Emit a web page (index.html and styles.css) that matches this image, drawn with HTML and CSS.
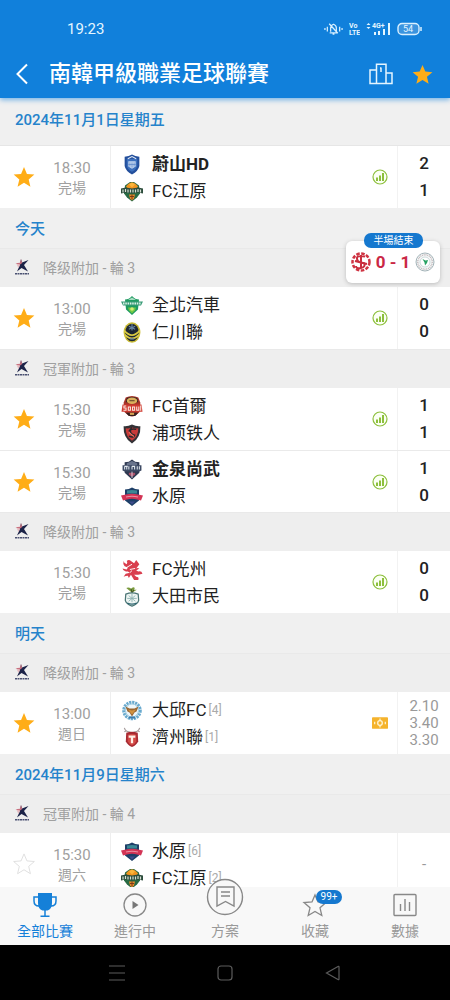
FILE: index.html
```
<!DOCTYPE html>
<html lang="zh-Hant">
<head>
  <meta charset="UTF-8">
  <meta name="viewport" content="width=device-width, initial-scale=1">
  <title>南韓甲級職業足球聯賽</title>
  <link rel="stylesheet" href="styles.css">
</head>
<body>
  <!-- ICON SPRITE START -->
  <svg class="sprite" aria-hidden="true">
    <symbol id="star" viewBox="0 0 24 24"><path d="M12 1l3.200 7.600 8.100.7-6.200 5.300 1.900 8L12 18.300l-7 4.300 1.900-8L.7 9.300l8.100-.7z"/></symbol>
    <symbol id="kleague" viewBox="0 0 16 16">
      <path d="M7 0l1 3.500L14.500 1 10 6l4 6.500L7.500 9 3 12.500 5.500 7z" fill="#1c2348"/>
      <path d="M1.500 4.200L6 3.800 7 0l1.200 4L5.500 6z" fill="#c7707f"/>
      <path d="M2.500 5l3.500.5L4.500 9z" fill="#e6bac0"/>
      <path d="M1 14.700h14" stroke="#4a5172" stroke-width="1.400" stroke-dasharray="2 .5"/>
    </symbol>
    <symbol id="stats" viewBox="0 0 16 16">
      <circle cx="8" cy="8" r="7" fill="#fbfff4" stroke="#8dbf3c" stroke-width="1.200"/>
      <path d="M5 8.500V12M8 6.500V12M11 4V12" stroke="#8dbf3c" stroke-width="2"/>
    </symbol>
    <symbol id="ulsan" viewBox="0 0 20 20">
      <path d="M3 2.500Q7 2.500 10 .5q3 2 7 2v9q-1 5-7 8-6-3-7-8z" fill="#234f9c"/>
      <path d="M5 4.500h10v7q-1 3.500-5 5.500-4-2-5-5.500z" fill="#3c70bd"/>
      <path d="M6.500 7h7v5L10 14l-3.500-2z" fill="#c5d7f0"/>
      <path d="M8 8v4M10 8v5M12 8v4M6.500 10h7" stroke="#5b87c9" stroke-width=".7"/>
      <path d="M6 4.500l4-2 4 2" stroke="#e4ecf7" fill="none"/>
    </symbol>
    <symbol id="gangwon" viewBox="0 0 22 20">
      <path d="M4 4l5-3.500h4L18 4l1 8-3 4-5 4-5-4-3-4z" fill="#286a44"/>
      <path d="M5 5q6-8 12 0l-2 3H7z" fill="#f0941f"/>
      <path d="M8 3l3-2 3 2-3 3z" fill="#fbb63c"/>
      <path d="M0 7l5-1 6 1 6-1 5 1v5l-5-1-6 1-6-1-5 1z" fill="#2c4c3c"/>
      <path d="M2 8v3M4.500 7.500v3M7 8v3M9.500 8v3M12 8v3M14.500 8v3M17 7.500v3M19.500 8v3" stroke="#d6e2d5" stroke-width="1.200"/>
      <path d="M8 13h6l-1 4-2 2-2-2z" fill="#e58a28"/>
      <path d="M9 15l4 0M11 13v5" stroke="#7b3b18"/>
    </symbol>
    <symbol id="jeonbuk" viewBox="0 0 22 20">
      <path d="M4 4q4 0 7-3.500Q14 4 18 4l-1 10-6 5.500L5 14z" fill="#1e9a61"/>
      <path d="M7 4.500l4-2.500 4 2.500z" fill="#a6dcc0"/>
      <path d="M0 6h22l-2 4H2z" fill="#3a9c78"/>
      <path d="M2 8h18" stroke="#d9f1e5" stroke-width="1.800" stroke-dasharray="1.500 .8"/>
      <path d="M7 12h8l-1 3-3 3-3-3z" fill="#71c943"/>
      <circle cx="11" cy="13.500" r="1.800" fill="#d8eb75"/>
    </symbol>
    <symbol id="incheon" viewBox="0 0 20 20">
      <ellipse cx="10" cy="10" rx="8" ry="9.700" fill="#c9bb35"/>
      <ellipse cx="10" cy="10" rx="6.500" ry="8.400" fill="#1e2732"/>
      <path d="M2.500 8q7.500 9 15 0M3 12q7 7 14 0" stroke="#d9cb43" stroke-width="1.600" fill="none"/>
      <path d="M10 2v6M7 4l6 3M13 4L7 7M8 16h4" stroke="#6585a4" stroke-width="1.100"/>
      <circle cx="10" cy="10" r="1.700" fill="#182431"/>
    </symbol>
    <symbol id="seoul" viewBox="0 0 20 20">
      <path d="M4 1.500q6-3 12 0l2 5-1 9q-4 4-7 4t-7-4l-1-9z" fill="#a83328"/>
      <path d="M5 2q5-2 10 0l1 4H4z" fill="#362323"/>
      <ellipse cx="10" cy="4.500" rx="5" ry="3" fill="#dab05c"/>
      <path d="M7.500 4.500h5" stroke="#604327"/>
      <path d="M1 8h18l1 7H0z" fill="#cf392f"/>
      <path d="M4.500 9.500H2.300v2h2v2H1.800M6.500 10.500h2v3h-2zM10.500 10.500h2v3h-2zM14.500 10v3.500h2V10M18.300 9v5" stroke="#fbe7df" stroke-width="1" fill="none"/>
      <path d="M4 16h12l-3 3H7z" fill="#342020"/>
      <path d="M8 17h4" stroke="#d6a453" stroke-width="2"/>
    </symbol>
    <symbol id="pohang" viewBox="0 0 20 20">
      <path d="M2 3q4 .5 8-1.500Q14 3.500 18 3q.5 11-8 16.500Q1.500 14 2 3z" fill="#333236"/>
      <path d="M4 5q3 .5 6-1 3 1.500 6 1 0 8-6 12-6-4-6-12z" fill="#c83a38"/>
      <path d="M14 6Q8 5 8.500 8t4 3.500q0 3-5.500 1M10 4l-3 4" stroke="#29282c" stroke-width="1.300" fill="none"/>
      <path d="M7 9l5 4" stroke="#ed7965"/>
    </symbol>
    <symbol id="gimcheon" viewBox="0 0 20 20">
      <path d="M3 3l4-.5L10 .5l3 2 4 .5v10l-7 6.500L3 13z" fill="#2e3850"/>
      <path d="M5 4l5-2 5 2v3H5z" fill="#68738b"/>
      <path d="M1 6h18v5l-2 1H3l-2-1z" fill="#3c4963"/>
      <path d="M3 10V7m2 0v3m2-3v3m3-3v3m2.500-3v3m2.500-3v3m2-3v3M3 7h3m4 0h3" stroke="#e1e7ed" fill="none"/>
      <path d="M7 13h6v2l-3 2-3-2z" fill="#a95069"/>
      <path d="M10 12v6" stroke="#eae5ee" stroke-width=".8"/>
    </symbol>
    <symbol id="suwon" viewBox="0 0 22 20">
      <path d="M4 3q4 0 7-2 3 2 7 2v11l-7 5.500L4 14z" fill="#1d3f67"/>
      <path d="M6 4q5-1 10 0v3H6z" fill="#3b8795"/>
      <path d="M0 9l5-1q6-1.500 12 0l5 1-2 5-4-1q-5-1.500-10 0l-4 1z" fill="#d33455"/>
      <path d="M5 10.500q6-1.500 12 0" stroke="#ea92a3" stroke-width="1.200" fill="none"/>
      <path d="M8 15h6l-3 3z" fill="#3f4c8d"/>
    </symbol>
    <symbol id="gwangju" viewBox="0 0 20 20">
      <path d="M9 2q-2-2-4 0 1 1 0 3-3-1-3-3Q1 5 3 7l3 1-1 2-4-1q1 3 5 3l2 1-4 1-2 3q2-1 4-1l1 2 2-3 3 5h4q1-3-2-3l-2-2 4 0 4-1q-1-3-4-2l-2-1 3-2q-2-1-3 0l3-4-3-4-2 3z" fill="#d93e4e"/>
      <path d="M5 8l5-3M8 10l5-1M8 13l2-2" stroke="#fff" stroke-width=".9"/>
    </symbol>
    <symbol id="daejeon" viewBox="0 0 20 22">
      <path d="M10 7L4 2q3-1 5 1 2-3 4-1l-1 2 3 0-5 3z" fill="#78993a"/>
      <path d="M9 3l1 4 2-3" stroke="#3d4e29" fill="none"/>
      <path d="M3.500 8.500Q10 6 16.500 8.500L17 15q-1 4-7 6-6-2-7-6z" fill="#eef5f3" stroke="#497474" stroke-width="1.300"/>
      <path d="M5 13h10M10 8v9M6.500 16l7-6M6.500 10l7 6" stroke="#8bb1af" stroke-width=".9"/>
      <path d="M5 18q5 2 10 0" stroke="#2f6670" stroke-width="1.500" fill="none"/>
    </symbol>
    <symbol id="daegu" viewBox="0 0 22 20">
      <circle cx="11" cy="10" r="8.300" fill="#edf6fa" stroke="#68a9ce" stroke-width="3" stroke-dasharray="2.200 .8"/>
      <circle cx="11" cy="10" r="6.500" fill="none" stroke="#9ccbe1"/>
      <path d="M4.500 6l4 2h5l4-2-2 5-2 1-2.500 4L8.500 12l-2-1z" fill="#996632"/>
      <path d="M7 9l4 1 4-1-4 5z" fill="#d1913f"/>
      <path d="M8 17h6" stroke="#3b7bae" stroke-width="2"/>
    </symbol>
    <symbol id="jeju" viewBox="0 0 20 22">
      <path d="M2 1q1 4 5 4l3 1 3-1q4 0 5-4M4 4l-2 1M16 4l2 1" fill="none" stroke="#a59b9a" stroke-width="1.200"/>
      <path d="M4 6q6-2 12 0l.5 9q-1.500 4-6.500 6-5-2-6.500-6z" fill="#a62931"/>
      <path d="M5.500 8q4.500-1.500 9 0v7q-1 3-4.500 4.500Q6.500 18 5.500 15z" fill="#d34a46"/>
      <path d="M6.500 9h7v2.200h-2.300V17H8.800v-5.800H6.500z" fill="#fff0e6"/>
    </symbol>
  </svg>
  <!-- ICON SPRITE END -->

  <div class="app">
    <!-- HEADER START -->
    <header class="header">
      <div class="status">
        <span class="clock">19:23</span>
        <div class="status-icons">
          <svg width="19" height="14" viewBox="0 0 20 14" fill="none" stroke="#d9f0ff" stroke-width="1.300">
            <path d="M6 11h8.500M7 10V6q0-3 3-4 3 1 3 4v4M5.500 1.500l9 10M9 12.500h2M3.500 4.500v5M16.500 4.500v5M1 6v2M19 6v2"/>
          </svg>
          <svg width="11" height="14" viewBox="0 0 11 14" fill="#e5f6ff" class="tiny"><text x="0" y="6">Vo</text><text x="0" y="13">LTE</text></svg>
          <svg width="25" height="14" viewBox="0 0 25 14" fill="#e5f6ff" class="tiny">
            <path d="M2.500 1l2 2h-4zM2.500 7l2-2h-4zM8 10h2v3H8zM12 9h2v4h-2zM17 7h2v6h-2zM22 1h2v12h-2z"/>
            <text x="6" y="6">4G+</text>
          </svg>
          <svg width="25" height="14" viewBox="0 0 25 14">
            <rect x="1" y="1.500" width="21" height="11" rx="4" fill="#3b94df" stroke="#d9f0ff" stroke-width="1.400"/>
            <path d="M24 5v4" stroke="#d9f0ff" stroke-width="1.500"/>
            <text x="6" y="10" class="battery">54</text>
          </svg>
        </div>
      </div>
      <div class="titlebar">
        <button class="icon-btn back" aria-label="返回">
          <svg width="14" height="22" viewBox="0 0 14 22" fill="none" stroke="#fff" stroke-width="2"><path d="M12 1.500L2.500 11 12 20.500"/></svg>
        </button>
        <h1>南韓甲級職業足球聯賽</h1>
        <button class="icon-btn" aria-label="排名">
          <svg width="24" height="22" viewBox="0 0 24 22" fill="none" stroke="#e5f5ff" stroke-width="1.500"><path d="M7.500 7H1v13.500h22V10h-6M7.500 20.500V1.200H17v19.300M12 4.500V9M11 5h1"/></svg>
        </button>
        <button class="icon-btn fav-on" aria-label="收藏聯賽"><svg width="21" height="21"><use href="#star"/></svg></button>
      </div>
    </header>
    <!-- HEADER END -->

    <!-- MATCH LIST START -->
    <main class="list">
      <h2 class="date date-sticky">2024年11月1日星期五</h2>

      <article class="match">
        <button class="fav fav-on" aria-label="收藏"><svg><use href="#star"/></svg></button>
        <div class="time"><time>18:30</time><span>完場</span></div>
        <div class="teams">
          <div class="team win"><svg><use href="#ulsan"/></svg>蔚山HD</div>
          <div class="team"><svg><use href="#gangwon"/></svg>FC江原</div>
        </div>
        <svg class="mark"><use href="#stats"/></svg>
        <div class="score"><b>2</b><b>1</b></div>
      </article>

      <h2 class="date">今天</h2>
      <h3 class="round"><svg><use href="#kleague"/></svg>降级附加 - 輪 3</h3>
      <article class="match">
        <button class="fav fav-on" aria-label="收藏"><svg><use href="#star"/></svg></button>
        <div class="time"><time>13:00</time><span>完場</span></div>
        <div class="teams">
          <div class="team"><svg><use href="#jeonbuk"/></svg>全北汽車</div>
          <div class="team"><svg><use href="#incheon"/></svg>仁川聯</div>
        </div>
        <svg class="mark"><use href="#stats"/></svg>
        <div class="score"><b>0</b><b>0</b></div>
      </article>

      <h3 class="round"><svg><use href="#kleague"/></svg>冠軍附加 - 輪 3</h3>
      <article class="match">
        <button class="fav fav-on" aria-label="收藏"><svg><use href="#star"/></svg></button>
        <div class="time"><time>15:30</time><span>完場</span></div>
        <div class="teams">
          <div class="team"><svg><use href="#seoul"/></svg>FC首爾</div>
          <div class="team"><svg><use href="#pohang"/></svg>浦项铁人</div>
        </div>
        <svg class="mark"><use href="#stats"/></svg>
        <div class="score"><b>1</b><b>1</b></div>
      </article>
      <article class="match">
        <button class="fav fav-on" aria-label="收藏"><svg><use href="#star"/></svg></button>
        <div class="time"><time>15:30</time><span>完場</span></div>
        <div class="teams">
          <div class="team win"><svg><use href="#gimcheon"/></svg>金泉尚武</div>
          <div class="team"><svg><use href="#suwon"/></svg>水原</div>
        </div>
        <svg class="mark"><use href="#stats"/></svg>
        <div class="score"><b>1</b><b>0</b></div>
      </article>

      <h3 class="round"><svg><use href="#kleague"/></svg>降级附加 - 輪 3</h3>
      <article class="match">
        <span></span>
        <div class="time"><time>15:30</time><span>完場</span></div>
        <div class="teams">
          <div class="team"><svg><use href="#gwangju"/></svg>FC光州</div>
          <div class="team"><svg><use href="#daejeon"/></svg>大田市民</div>
        </div>
        <svg class="mark"><use href="#stats"/></svg>
        <div class="score"><b>0</b><b>0</b></div>
      </article>

      <h2 class="date">明天</h2>
      <h3 class="round"><svg><use href="#kleague"/></svg>降级附加 - 輪 3</h3>
      <article class="match">
        <button class="fav fav-on" aria-label="收藏"><svg><use href="#star"/></svg></button>
        <div class="time"><time>13:00</time><span>週日</span></div>
        <div class="teams">
          <div class="team"><svg><use href="#daegu"/></svg>大邱FC<small>[4]</small></div>
          <div class="team"><svg><use href="#jeju"/></svg>濟州聯<small>[1]</small></div>
        </div>
        <svg class="mark" viewBox="0 0 18 18">
          <rect x="0" y="2.500" width="18" height="13" rx="1" fill="#f5b32c"/>
          <path d="M9 4v10M3 7.500v3M15 7.500v3" stroke="#fff0c4" stroke-width="1.500"/>
          <circle cx="9" cy="9" r="2.600" fill="#f5b32c" stroke="#fff3d0" stroke-width="1.500"/>
        </svg>
        <div class="odds"><span>2.10</span><span>3.40</span><span>3.30</span></div>
      </article>

      <h2 class="date">2024年11月9日星期六</h2>
      <h3 class="round"><svg><use href="#kleague"/></svg>冠軍附加 - 輪 4</h3>
      <article class="match">
        <button class="fav" aria-label="收藏"><svg><use href="#star"/></svg></button>
        <div class="time"><time>15:30</time><span>週六</span></div>
        <div class="teams">
          <div class="team"><svg><use href="#suwon"/></svg>水原<small>[6]</small></div>
          <div class="team"><svg><use href="#gangwon"/></svg>FC江原<small>[2]</small></div>
        </div>
        <span></span>
        <div class="odds"><span>-</span></div>
      </article>
    </main>
    <!-- MATCH LIST END -->

    <!-- LIVE SCORE BUBBLE -->
    <aside class="live">
      <span class="live-state">半場結束</span>
      <svg width="20" height="20" viewBox="0 0 20 20">
        <circle cx="10" cy="10" r="8.500" fill="#fff" stroke="#cf3443" stroke-width="2.500" stroke-dasharray="3.500 1.500"/>
        <path d="M14 4.500Q5 3 6 7t7 4q2 4-3 5t-5-2M4 9l12 3M10 3v14" fill="none" stroke="#c92e3e" stroke-width="2"/>
      </svg>
      <strong>0 - 1</strong>
      <svg width="20" height="20" viewBox="0 0 20 20">
        <circle cx="10" cy="10" r="9" fill="#f5f8f8" stroke="#a3b3b8"/>
        <circle cx="10" cy="10" r="7.200" fill="none" stroke="#c3b8bb" stroke-width="1.500" stroke-dasharray="1 .8"/>
        <circle cx="10" cy="10" r="5" fill="#fff" stroke="#b9c9cc" stroke-width=".7"/>
        <path d="M7.500 7l3 1.500L13 8l-1 3-2 2.500-.5-3z" fill="#27a263"/>
      </svg>
    </aside>

    <!-- TAB BAR START -->
    <nav class="tabs">
      <a href="#" class="active">
        <svg width="26" height="26" viewBox="0 0 26 26" fill="none" stroke="#1580d8" stroke-width="1.500">
          <path d="M6 1h14v10q0 6-4.500 7.500h-5Q6 17 6 11z" fill="#1580d8" stroke="none"/>
          <path d="M6 5H2v4q0 5 5 5M20 5h4v4q0 5-5 5M13 18v6M8.500 24.200h9"/>
        </svg>
        全部比賽
      </a>
      <a href="#">
        <svg width="26" height="26" viewBox="0 0 26 26"><circle cx="13" cy="13" r="11" fill="none" stroke="#888" stroke-width="1.300"/><path d="M10.500 9l6 4-6 4z" fill="#777"/></svg>
        進行中
      </a>
      <a href="#" class="plan">
        <svg width="38" height="38" viewBox="0 0 38 38" fill="none" stroke="#888" stroke-width="1.400"><circle cx="19" cy="19" r="17.500" fill="#f8f8f8"/><path d="M11 9h17v19l-8.500-4.500L11 28zM15 14h9M15 18h9"/></svg>
        方案
      </a>
      <a href="#">
        <svg width="26" height="26" viewBox="0 0 26 26" fill="none" stroke="#888" stroke-width="1.300"><path d="M13 3l3 7 8 .6-6 5.200 1.800 7.700-6.800-4-6.800 4L8 15.800l-6-5.200 8-.6z"/></svg>
        <span class="badge">99+</span>
        收藏
      </a>
      <a href="#">
        <svg width="26" height="26" viewBox="0 0 26 26" fill="none" stroke="#888" stroke-width="1.400"><rect x="2" y="2.500" width="22" height="21" rx="1"/><path d="M8.500 12v7M13 7v12M17.500 10v9"/></svg>
        數據
      </a>
    </nav>
    <!-- TAB BAR END -->

    <div class="sysnav">
      <button aria-label="選單"><svg width="18" height="18" viewBox="0 0 18 18"><path d="M1 2h16M1 9h16M1 16h16"/></svg></button>
      <button aria-label="主畫面"><svg width="18" height="18" viewBox="0 0 18 18"><rect x="2" y="2" width="14" height="14" rx="3"/></svg></button>
      <button aria-label="上一頁"><svg width="18" height="18" viewBox="0 0 18 18"><path d="M15 3v12q0 1-1 .5L2.500 9 14 2.500q1-.5 1 .5z"/></svg></button>
    </div>
  </div>
</body>
</html>
```
FILE: styles.css
```
* {
  margin: 0;
  padding: 0;
  box-sizing: border-box;
}
body {
  font-family: Roboto, "Noto Sans CJK TC", sans-serif;
  background: #f0f0f0;
  color: #222;
}
button {
  display: flex;
  align-items: center;
  justify-content: center;
  border: 0;
  background: none;
  cursor: pointer;
}
svg { display: block; flex: none; }
.sprite { position: absolute; width: 0; height: 0; }

.app {
  position: relative;
  display: flex;
  flex-direction: column;
  height: 100vh;
}

/* header */
.header {
  z-index: 2;
  background: #1180db;
  color: #fff;
  box-shadow: 0 2px 5px #78b4e6;
}
.status {
  display: flex;
  align-items: center;
  justify-content: space-between;
  height: 50px;
  padding: 8px 28px 0 67px;
}
.clock { font-size: 15px; color: #e5f6ff; }
.status-icons { display: flex; gap: 6px; }
.tiny { font-size: 7px; font-weight: 700; }
.battery { font-size: 9px; fill: #e5f6ff; }
.titlebar {
  display: flex;
  align-items: center;
  gap: 19px;
  height: 48px;
  padding: 0 17px 0 14px;
}
.titlebar h1 {
  flex: 1;
  font-size: 22px;
  line-height: 48px;
  font-weight: 500;
  white-space: nowrap;
}
.back { width: 16px; }
.fav-on { fill: #ffad17; }

/* match list */
.list {
  flex: 1;
  min-height: 0;
  overflow-y: auto;
  scrollbar-width: none;
}
.date {
  height: 40px;
  padding-left: 15px;
  font-size: 15px;
  line-height: 42px;
  font-weight: 500;
  color: #2583cb;
}
.date-sticky {
  height: 48px;
  line-height: 44px;
  border-bottom: 1px solid #e6e6e6;
}
.round {
  display: flex;
  align-items: center;
  gap: 13px;
  height: 39px;
  padding: 0 14px 2px;
  background: #eee;
  border-top: 1px solid #e9e9e9;
  font-size: 14px;
  font-weight: 400;
  color: #a0a0a0;
}
.round svg { width: 16px; height: 16px; }

.match {
  display: grid;
  grid-template-columns: 48px 62px 1fr 34px 53px;
  align-items: center;
  height: 62px;
  background: #fff;
}
.match + .match { border-top: 1px solid #eaeaea; }
.fav svg { width: 22px; height: 22px; }
.fav:not(.fav-on) svg { fill: #fff; stroke: #ddd; }
.time {
  display: flex;
  flex-direction: column;
  align-items: center;
  padding: 2px 14px 0 0;
  font-size: 14px;
  line-height: 20px;
  color: #a0a0a0;
}
.time time { font-size: 15px; }
.teams {
  align-self: stretch;
  padding: 5px 0 0 10px;
  border-left: 1px solid #eee;
}
.team {
  display: flex;
  align-items: center;
  height: 27px;
  font-size: 17px;
  line-height: 27px;
  white-space: nowrap;
}
.team svg { width: 22px; height: 21px; margin-right: 9px; }
.team small { margin-left: 2px; font-size: 12px; color: #aaa; }
.win { font-weight: 700; }
.mark { width: 16px; height: 16px; justify-self: center; }
.score, .odds {
  display: flex;
  flex-direction: column;
  align-self: stretch;
  justify-content: center;
  align-items: center;
  border-left: 1px solid #f2f2f2;
}
.score { font-size: 17px; line-height: 27px; }
.score b { font-weight: 500; }
.odds { font-size: 15px; line-height: 17px; color: #999; }

/* floating live score */
.live {
  position: absolute;
  z-index: 3;
  top: 241px;
  right: 10px;
  display: flex;
  align-items: center;
  justify-content: center;
  gap: 5px;
  width: 94px;
  height: 42px;
  border-radius: 6px;
  background: #fff;
  box-shadow: 0 1px 4px #bbb;
}
.live strong { font-size: 17px; font-weight: 700; color: #ca2846; white-space: nowrap; }
.live-state {
  position: absolute;
  top: -8px;
  left: 18px;
  width: 59px;
  border-radius: 7px;
  background: #1578cf;
  color: #fff;
  font-size: 10px;
  line-height: 15px;
  text-align: center;
}

/* bottom tabs, the middle icon rises above the bar */
.tabs {
  z-index: 1;
  display: grid;
  grid-template-columns: repeat(5, 1fr);
  grid-template-rows: 58px;
  background: #f8f8f8;
}
.tabs a {
  position: relative;
  display: flex;
  flex-direction: column;
  align-items: center;
  justify-content: flex-end;
  gap: 3px;
  padding-bottom: 4px;
  font-size: 14px;
  line-height: 20px;
  color: #999;
  text-decoration: none;
}
.tabs .active { color: #1580d8; }
.tabs .plan { gap: 5px; }
.badge {
  position: absolute;
  top: 3px;
  left: 50%;
  width: 26px;
  margin-left: 1px;
  border-radius: 7px;
  background: #1578cf;
  color: #fff;
  font-size: 10px;
  line-height: 14px;
  text-align: center;
}

.sysnav {
  display: grid;
  grid-template-columns: repeat(3, 1fr);
  height: 55px;
  padding: 0 14%;
  background: #000;
}
.sysnav svg { fill: none; stroke: #5c5c5c; stroke-width: 1.2; }
```
